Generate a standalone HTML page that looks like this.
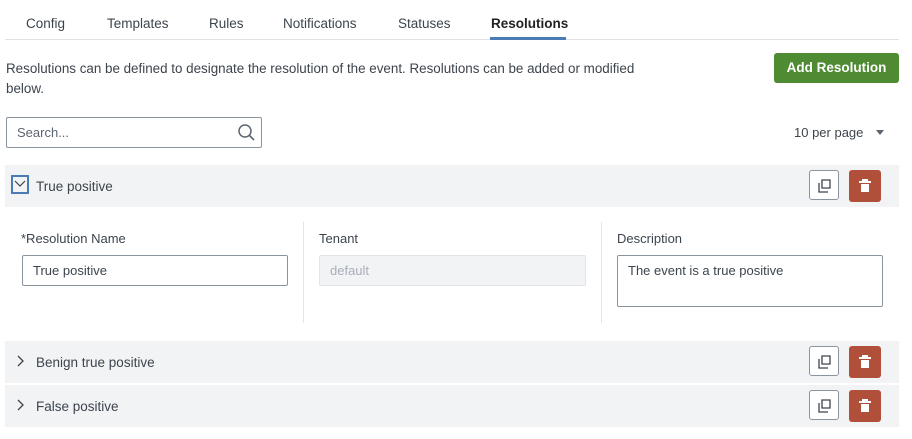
<!DOCTYPE html><html><head><style>
body{margin:0;width:912px;height:439px;background:#fff;font-family:"Liberation Sans",sans-serif;font-size:13px;color:#3c444d;position:relative;overflow:hidden}
.a{position:absolute}
.tab{position:absolute;top:16px;font-size:13.5px;color:#3c444d}
.row{position:absolute;left:5px;width:894px;height:42px;background:#f2f3f5}
.row .t{position:absolute;left:31px;top:14px;font-size:13.5px}
.cp{position:absolute;left:804px;top:5px;width:30px;height:30px;border:1px solid #8a93a0;border-radius:3px;background:#fff;box-sizing:border-box}
.tr{position:absolute;left:844px;top:5px;width:32px;height:32px;border-radius:3px;background:#b1503a}
.inp{position:absolute;height:31px;border:1px solid #8a93a0;border-radius:2px;box-sizing:border-box;padding:7px 10px;font-size:13px}
.lbl{position:absolute;top:231px;font-size:13px}
</style></head><body>
<div class="tab" style="left:26px">Config</div>
<div class="tab" style="left:107px">Templates</div>
<div class="tab" style="left:209px">Rules</div>
<div class="tab" style="left:283px">Notifications</div>
<div class="tab" style="left:398px">Statuses</div>
<div class="tab" style="left:491px;font-weight:bold;color:#222">Resolutions</div>
<div class="a" style="left:5px;top:39px;width:894px;height:1px;background:#dfe2e6"></div>
<div class="a" style="left:490px;top:37px;width:76px;height:3px;background:#4a7bb5"></div>
<div class="a" style="left:6px;top:59px;width:640px;line-height:20px;font-size:13.4px">Resolutions can be defined to designate the resolution of the event. Resolutions can be added or modified below.</div>
<div class="a" style="left:774px;top:53px;width:125px;height:30px;background:#4f8b33;border-radius:3px;color:#fff;font-weight:bold;font-size:13.5px;text-align:center;line-height:30px">Add Resolution</div>
<div class="inp" style="left:6px;top:117px;width:256px;color:#5c6570">Search...</div>
<svg class="a" style="left:237px;top:123px" width="20" height="20" viewBox="0 0 20 20"><circle cx="8" cy="8" r="6" fill="none" stroke="#5c6570" stroke-width="1.5"/><path d="M12.5 12.5L17 17" stroke="#5c6570" stroke-width="1.6"/></svg>
<div class="a" style="left:794px;top:125px;font-size:13px">10 per page</div>
<div class="a" style="left:876px;top:130px;width:0;height:0;border-left:4px solid transparent;border-right:4px solid transparent;border-top:5px solid #5c6570"></div>

<div class="row" style="top:165px"><div class="a" style="left:6px;top:10px;width:18px;height:19px;border:2px solid #4a7bb5;box-sizing:border-box"></div><svg class="a" style="left:9px;top:15px" width="12" height="8"><path d="M1 1l5 5 5-5" fill="none" stroke="#3c444d" stroke-width="1.2"/></svg><div class="t">True positive</div>
<div class="cp"></div><div class="tr"></div></div>
<div class="row" style="top:341px"><svg class="a" style="left:12px;top:14px" width="8" height="12"><path d="M1 1l5 5-5 5" fill="none" stroke="#3c444d" stroke-width="1.3"/></svg><div class="t">Benign true positive</div><div class="cp"></div><div class="tr"></div></div>
<div class="row" style="top:385px"><svg class="a" style="left:12px;top:14px" width="8" height="12"><path d="M1 1l5 5-5 5" fill="none" stroke="#3c444d" stroke-width="1.3"/></svg><div class="t">False positive</div><div class="cp"></div><div class="tr"></div></div>

<div class="lbl" style="left:21px">*Resolution Name</div>
<div class="lbl" style="left:319px">Tenant</div>
<div class="lbl" style="left:617px">Description</div>
<div class="a" style="left:303px;top:222px;width:1px;height:101px;background:#e1e4e8"></div>
<div class="a" style="left:601px;top:222px;width:1px;height:101px;background:#e1e4e8"></div>
<div class="inp" style="left:22px;top:255px;width:266px">True positive</div>
<div class="inp" style="left:319px;top:255px;width:267px;background:#f2f3f5;border-color:#e1e4e8;color:#a8afb8">default</div>
<div class="inp" style="left:617px;top:255px;width:266px;height:52px">The event is a true positive</div>
<script>
document.querySelectorAll('.cp').forEach(e=>e.innerHTML='<svg style="position:absolute;left:8px;top:8px" width="14" height="14"><path d="M4 1h8v8H4z M1 4v9h9" fill="none" stroke="#3c444d" stroke-width="1.3"/></svg>');
document.querySelectorAll('.tr').forEach(e=>e.innerHTML='<svg style="position:absolute;left:10px;top:9px" width="12" height="14"><rect x="3" y="0" width="6" height="2" fill="#fff"/><rect x="0" y="2" width="12" height="2" fill="#fff"/><rect x="2" y="5" width="8" height="8" fill="#fff"/></svg>');
</script>
</body></html>
